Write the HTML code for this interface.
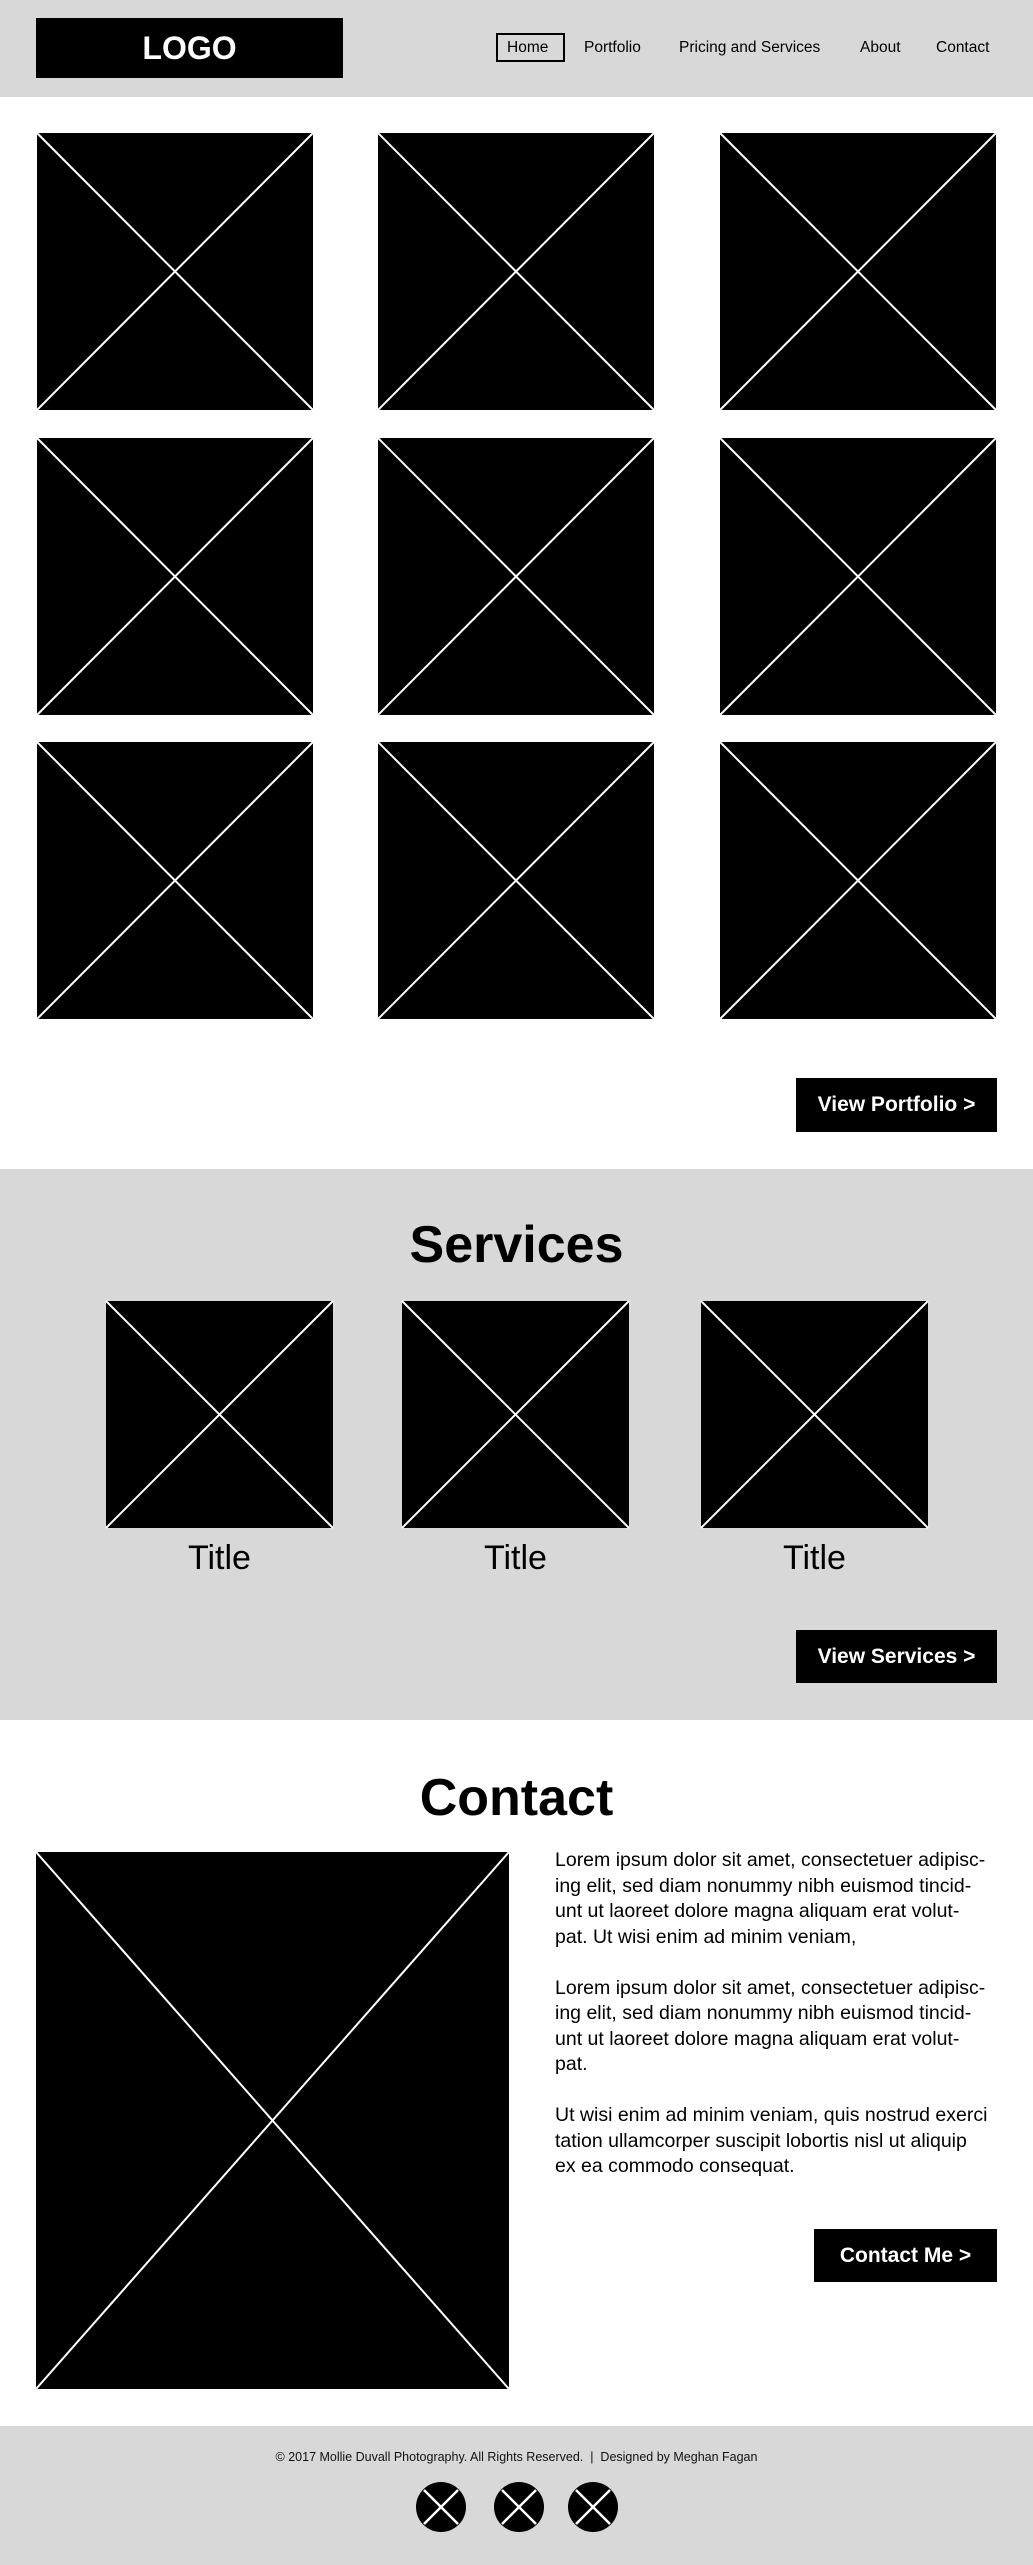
<!DOCTYPE html>
<html><head><meta charset="utf-8"><style>
*{margin:0;padding:0;box-sizing:border-box}
body{width:1033px;height:2565px;position:relative;background:#fff;font-family:"Liberation Sans",sans-serif;color:#000;overflow:hidden}
.a{position:absolute}
.gray{background:#d8d8d8}
svg.ph{position:absolute;display:block}
.btn{position:absolute;background:#000;color:#fff;font-size:21px;font-weight:bold;display:flex;align-items:center;justify-content:center;white-space:nowrap}
.nav{position:absolute;top:36px;font-size:15.5px;line-height:24px;white-space:nowrap}
.t{position:absolute;font-weight:bold;text-align:center;white-space:nowrap}
.p{position:absolute;left:555px;font-size:19.5px;line-height:25.5px;white-space:nowrap}
</style></head><body>
<div class="a gray" style="left:0;top:0;width:1033px;height:97px"></div>
<div class="a" style="left:36px;top:18px;width:307px;height:60px;background:#000;color:#fff;font-weight:bold;font-size:32px;display:flex;align-items:center;justify-content:center">LOGO</div>
<div class="a" style="left:496px;top:33px;width:69px;height:29px;border:2px solid #000"></div>
<div class="nav" style="left:507px">Home</div>
<div class="nav" style="left:584px">Portfolio</div>
<div class="nav" style="left:679px">Pricing and Services</div>
<div class="nav" style="left:860px">About</div>
<div class="nav" style="left:936px">Contact</div>

<svg class="ph" style="left:0;top:0" width="1033" height="2565" viewBox="0 0 1033 2565">
<g stroke="#fff" stroke-width="2">
<g fill="#000">
<rect x="36" y="132" width="278" height="279"/><rect x="377" y="132" width="278" height="279"/><rect x="719" y="132" width="278" height="279"/>
<rect x="36" y="437" width="278" height="279"/><rect x="377" y="437" width="278" height="279"/><rect x="719" y="437" width="278" height="279"/>
<rect x="36" y="741" width="278" height="279"/><rect x="377" y="741" width="278" height="279"/><rect x="719" y="741" width="278" height="279"/>
</g>
<path d="M36 132L314 411M314 132L36 411M377 132L655 411M655 132L377 411M719 132L997 411M997 132L719 411
M36 437L314 716M314 437L36 716M377 437L655 716M655 437L377 716M719 437L997 716M997 437L719 716
M36 741L314 1020M314 741L36 1020M377 741L655 1020M655 741L377 1020M719 741L997 1020M997 741L719 1020"/>
</g>
</svg>

<div class="btn" style="left:796px;top:1078px;width:201px;height:54px">View Portfolio &gt;</div>

<div class="a gray" style="left:0;top:1169px;width:1033px;height:551px"></div>
<div class="t" style="left:0;width:1033px;top:1212px;font-size:52px;line-height:66px">Services</div>
<svg class="ph" style="left:0;top:1290px" width="1033" height="250" viewBox="0 1290 1033 250">
<g fill="#000"><rect x="106" y="1301" width="227" height="227"/><rect x="402" y="1301" width="227" height="227"/><rect x="701" y="1301" width="227" height="227"/></g>
<path stroke="#fff" stroke-width="2" d="M106 1301L333 1528M333 1301L106 1528M402 1301L629 1528M629 1301L402 1528M701 1301L928 1528M928 1301L701 1528"/>
</svg>
<div class="t" style="left:106px;width:227px;top:1537px;font-size:34px;line-height:42px;font-weight:normal">Title</div>
<div class="t" style="left:402px;width:227px;top:1537px;font-size:34px;line-height:42px;font-weight:normal">Title</div>
<div class="t" style="left:701px;width:227px;top:1537px;font-size:34px;line-height:42px;font-weight:normal">Title</div>
<div class="btn" style="left:796px;top:1630px;width:201px;height:53px">View Services &gt;</div>

<div class="t" style="left:0;width:1033px;top:1765px;font-size:52px;line-height:66px">Contact</div>
<svg class="ph" style="left:36px;top:1852px" width="473" height="537" viewBox="0 0 473 537">
<rect width="473" height="537" fill="#000"/>
<path stroke="#fff" stroke-width="2" d="M0 0L473 537M473 0L0 537"/>
</svg>
<div class="p" style="top:1848px">Lorem ipsum dolor sit amet, consectetuer adipisc-<br>ing elit, sed diam nonummy nibh euismod tincid-<br>unt ut laoreet dolore magna aliquam erat volut-<br>pat. Ut wisi enim ad minim veniam,<br><br>Lorem ipsum dolor sit amet, consectetuer adipisc-<br>ing elit, sed diam nonummy nibh euismod tincid-<br>unt ut laoreet dolore magna aliquam erat volut-<br>pat.<br><br>Ut wisi enim ad minim veniam, quis nostrud exerci<br>tation ullamcorper suscipit lobortis nisl ut aliquip<br>ex ea commodo consequat.</div>
<div class="btn" style="left:814px;top:2229px;width:183px;height:53px">Contact Me &gt;</div>

<div class="a gray" style="left:0;top:2426px;width:1033px;height:139px"></div>
<div class="a" style="left:0;width:1033px;top:2449px;text-align:center;font-size:12.5px;line-height:16px;color:#111">© 2017 Mollie Duvall Photography. All Rights Reserved.&nbsp; | &nbsp;Designed by Meghan Fagan</div>
<svg class="ph" style="left:410px;top:2476px" width="220" height="62" viewBox="410 2476 220 62">
<g fill="#000"><circle cx="441" cy="2507" r="25"/><circle cx="519" cy="2507" r="25"/><circle cx="593" cy="2507" r="25"/></g>
<path stroke="#fff" stroke-width="2.5" d="M424 2490L458 2524M458 2490L424 2524M502 2490L536 2524M536 2490L502 2524M576 2490L610 2524M610 2490L576 2524"/>
</svg>
</body></html>
